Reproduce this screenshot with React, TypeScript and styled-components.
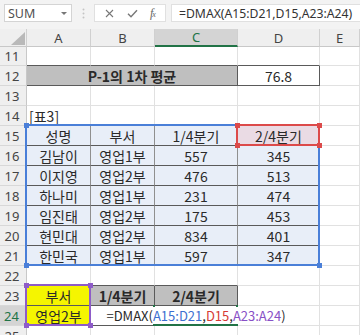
import React from 'react'
import styled, { createGlobalStyle } from 'styled-components'

const GlobalStyle = createGlobalStyle`
  html, body { margin: 0; padding: 0; background: #fff; }
  body { font-family: "Noto Sans", "Noto Sans CJK KR", sans-serif; }
`

const GRID = '#e1e1e1'
const DARK = '#5a5a5a'
const VERT = '#8f8f8f'
const GREEN = '#217346'
const TABLE = '#e8eef8'
const PINK = '#eadbe4'
const GRAY = '#bfbfbf'
const YELLOW = '#f5f500'
const KR = '"Noto Sans CJK KR", "Noto Sans", sans-serif'

const COLS = [27, 64, 64, 83, 82, 40]
const colX = (i: number) => COLS.slice(0, i).reduce((a, b) => a + b, 0)
const rowY = (r: number) => (r === 11 ? 18 : 37 + (r - 12) * 20)

const Frame = styled.div`
  width: 360px;
  height: 335px;
  overflow: hidden;
  background: #fff;
`

const FormulaBar = styled.div`
  height: 29px;
  background: #f3f3f3;
  display: flex;
  align-items: center;
  padding-left: 4px;
  box-sizing: border-box;
  padding-bottom: 3px;
`

const NameBox = styled.div`
  width: 68px;
  height: 18px;
  box-sizing: border-box;
  background: #fff;
  border: 1px solid #d4d4d4;
  display: flex;
  align-items: center;
  justify-content: space-between;
  padding: 0 4px 0 3px;
  font-size: 12.5px;
  color: #505050;
`

const Arrow = styled.span`
  width: 0;
  height: 0;
  border-left: 3px solid transparent;
  border-right: 3px solid transparent;
  border-top: 3px solid #777;
`

const Dots = styled.div`
  width: 22px;
  display: flex;
  justify-content: center;
`

const ButtonBox = styled.div`
  width: 72px;
  height: 18px;
  box-sizing: border-box;
  background: #fff;
  border: 1px solid #e0e0e0;
  display: flex;
  align-items: center;
  justify-content: space-around;
  padding: 0 4px;
  color: #777;
`

const Fx = styled.span`
  font-family: "Liberation Serif", serif;
  font-style: italic;
  font-size: 12px;
  color: #666;
  letter-spacing: -1px;
  & small { font-size: 8px; }
`

const FormulaInput = styled.div`
  flex: 1;
  height: 18px;
  margin-left: 5px;
  box-sizing: border-box;
  background: #fff;
  border: 1px solid #e0e0e0;
  border-right: none;
  display: flex;
  align-items: center;
  padding-left: 7px;
  font-size: 12.2px;
  color: #333;
  white-space: nowrap;
`

const Sheet = styled.div`
  position: relative;
  display: grid;
  grid-template-columns: ${COLS.map((c) => `${c}px`).join(' ')};
  grid-template-rows: 18px 19px repeat(14, 20px);
`

const Corner = styled.div`
  background: #efefef;
  border-right: 1px solid #d0d0d0;
  border-bottom: 1px solid #c8c8c8;
  display: flex;
  align-items: flex-end;
  justify-content: flex-end;
  padding: 0 1px 1px 0;
  box-sizing: border-box;
`

const ColHead = styled.div<{ $active?: boolean }>`
  background: ${(p) => (p.$active ? '#d4d4d4' : '#efefef')};
  color: ${(p) => (p.$active ? GREEN : '#444')};
  border-right: 1px solid #d0d0d0;
  border-bottom: ${(p) => (p.$active ? `2px solid ${GREEN}` : '1px solid #c8c8c8')};
  box-sizing: border-box;
  display: flex;
  align-items: center;
  justify-content: center;
  font-size: 13px;
`

const RowHead = styled.div<{ $active?: boolean }>`
  background: ${(p) => (p.$active ? '#d4d4d4' : '#efefef')};
  color: ${(p) => (p.$active ? GREEN : '#444')};
  border-right: ${(p) => (p.$active ? `2px solid ${GREEN}` : '1px solid #c8c8c8')};
  border-bottom: 1px solid #d8d8d8;
  box-sizing: border-box;
  display: flex;
  align-items: center;
  justify-content: center;
  padding-right: 2px;
  font-size: 13px;
`

const Cell = styled.div<{ $span?: number; $bg?: string; $bold?: boolean; $left?: boolean; $rb?: string; $bb?: string }>`
  grid-column: span ${(p) => p.$span ?? 1};
  background: ${(p) => p.$bg ?? 'transparent'};
  border-right: 1px solid ${(p) => p.$rb ?? GRID};
  border-bottom: 1px solid ${(p) => p.$bb ?? GRID};
  box-sizing: border-box;
  display: flex;
  align-items: center;
  justify-content: ${(p) => (p.$left ? 'flex-start' : 'center')};
  padding: 0 ${(p) => (p.$left ? '2px' : '0')};
  font-family: ${KR};
  font-size: 14px;
  font-weight: ${(p) => (p.$bold ? 700 : 400)};
  color: #2a2a2a;
  white-space: nowrap;
  min-width: 0;
`

const EditText = styled.span`
  position: relative;
  z-index: 3;
  background: #fff;
  height: 17px;
  line-height: 17px;
  padding: 0 2px;
  font-size: 13px;
`

const Ref = styled.span<{ $c: string }>`
  color: ${(p) => p.$c};
`

const Highlight = styled.div<{ $c: string }>`
  position: absolute;
  box-sizing: border-box;
  border: 2px solid ${(p) => p.$c};
  z-index: 2;
  pointer-events: none;
`

const Handle = styled.span<{ $c: string }>`
  position: absolute;
  width: 5px;
  height: 5px;
  background: ${(p) => p.$c};
`

const ActiveCell = styled.div`
  position: absolute;
  box-sizing: border-box;
  border: 2px solid ${GREEN};
  border-top: none;
  z-index: 2;
`

type CellDef = {
  t?: React.ReactNode
  span?: number
  bg?: string
  bold?: boolean
  left?: boolean
  rb?: string
  bb?: string
  edit?: boolean
}

const blank = (): CellDef => ({})

const tableRow = (cells: string[], first = false): CellDef[] => [
  ...cells.map((t, i) => ({
    t,
    bg: first && i === 3 ? PINK : TABLE,
    rb: i < 3 ? VERT : DARK,
    bb: DARK,
  })),
  blank(),
]

const people = [
  ['김남이', '영업1부', '557', '345'],
  ['이지영', '영업2부', '476', '513'],
  ['하나미', '영업1부', '231', '474'],
  ['임진태', '영업2부', '175', '453'],
  ['현민대', '영업2부', '834', '401'],
  ['한민국', '영업1부', '597', '347'],
]

const rows: { n: number; cells: CellDef[] }[] = [
  { n: 11, cells: [{ bb: DARK }, { bb: DARK }, { bb: DARK }, { bb: DARK }, blank()] },
  {
    n: 12,
    cells: [
      { t: 'P-1의 1차 평균', span: 3, bg: GRAY, bold: true, rb: DARK, bb: DARK },
      { t: '76.8', rb: DARK, bb: DARK },
      blank(),
    ],
  },
  { n: 13, cells: [blank(), blank(), blank(), blank(), blank()] },
  { n: 14, cells: [{ t: '[표3]', left: true, bb: DARK }, { bb: DARK }, { bb: DARK }, { bb: DARK }, blank()] },
  { n: 15, cells: tableRow(['성명', '부서', '1/4분기', '2/4분기'], true) },
  ...people.map((p, i) => ({ n: 16 + i, cells: tableRow(p) })),
  { n: 22, cells: [{ bb: DARK }, { bb: DARK }, { bb: DARK }, blank(), blank()] },
  {
    n: 23,
    cells: [
      { t: '부서', bg: YELLOW, rb: DARK, bb: DARK },
      { t: '1/4분기', bg: GRAY, bold: true, rb: DARK, bb: DARK },
      { t: '2/4분기', bg: GRAY, bold: true, rb: DARK, bb: DARK },
      blank(),
      blank(),
    ],
  },
  {
    n: 24,
    cells: [{ t: '영업2부', bg: YELLOW, rb: DARK, bb: DARK }, { bb: DARK }, { edit: true, bb: GREEN }, blank(), blank()],
  },
  { n: 25, cells: [blank(), blank(), blank(), blank(), blank()] },
]

const BLUE = '#4a7fd8'
const RED = '#dc4a4a'
const PURPLE = '#8e5cc8'

const Formula = () => (
  <>
    =DMAX(<Ref $c="#3d6fd0">A15:D21</Ref>,<Ref $c="#d63a34">D15</Ref>,<Ref $c="#8850c6">A23:A24</Ref>)
  </>
)

// range outline with corner squares, covering columns c0..c1 and rows r0..r1
const Range = ({ c, c0, c1, r0, r1 }: { c: string; c0: number; c1: number; r0: number; r1: number }) => {
  const left = colX(c0) - 2
  const top = rowY(r0) - 2
  const width = colX(c1 + 1) - left
  const height = rowY(r1 + 1) - top
  return (
    <Highlight $c={c} style={{ left, top, width, height }}>
      <Handle $c={c} style={{ left: -3.5, top: -3.5 }} />
      <Handle $c={c} style={{ right: -3.5, top: -3.5 }} />
      <Handle $c={c} style={{ left: -3.5, bottom: -3.5 }} />
      <Handle $c={c} style={{ right: -3.5, bottom: -3.5 }} />
    </Highlight>
  )
}

export default function App() {
  return (
    <Frame>
      <GlobalStyle />
      <FormulaBar>
        <NameBox>
          SUM
          <Arrow />
        </NameBox>
        <Dots>
          <svg width="3" height="11" viewBox="0 0 3 11">
            <circle cx="1.5" cy="1.5" r="1" fill="#c4c4c4" />
            <circle cx="1.5" cy="5.5" r="1" fill="#c4c4c4" />
            <circle cx="1.5" cy="9.5" r="1" fill="#c4c4c4" />
          </svg>
        </Dots>
        <ButtonBox>
          <svg width="9" height="9" viewBox="0 0 9 9">
            <path d="M1 1 L8 8 M8 1 L1 8" stroke="#777" strokeWidth="1.1" />
          </svg>
          <svg width="11" height="9" viewBox="0 0 11 9">
            <path d="M1 4.8 L4 7.8 L10 1.2" stroke="#777" strokeWidth="1.4" fill="none" />
          </svg>
          <Fx>
            f<small>x</small>
          </Fx>
        </ButtonBox>
        <FormulaInput>=DMAX(A15:D21,D15,A23:A24)</FormulaInput>
      </FormulaBar>
      <Sheet>
        <Corner>
          <svg width="14" height="13" viewBox="0 0 14 13">
            <polygon points="14,0 14,13 0,13" fill="#b9b9b9" />
          </svg>
        </Corner>
        {['A', 'B', 'C', 'D', 'E'].map((l) => (
          <ColHead key={l} $active={l === 'C'}>
            {l}
          </ColHead>
        ))}
        {rows.map((row) => (
          <React.Fragment key={row.n}>
            <RowHead $active={row.n === 24}>{row.n}</RowHead>
            {row.cells.map((c, i) => (
              <Cell key={i} $span={c.span} $bg={c.bg} $bold={c.bold} $left={c.left} $rb={c.rb} $bb={c.bb}>
                {c.edit ? (
                  <EditText>
                    <Formula />
                  </EditText>
                ) : (
                  c.t
                )}
              </Cell>
            ))}
          </React.Fragment>
        ))}
        <Range c={BLUE} c0={1} c1={4} r0={15} r1={21} />
        <Range c={RED} c0={4} c1={4} r0={15} r1={15} />
        <Range c={PURPLE} c0={1} c1={1} r0={23} r1={24} />
        <ActiveCell
          style={{ left: colX(3) - 2, top: rowY(24) - 1, width: colX(4) - colX(3) + 2, height: 21 }}
        />
      </Sheet>
    </Frame>
  )
}
